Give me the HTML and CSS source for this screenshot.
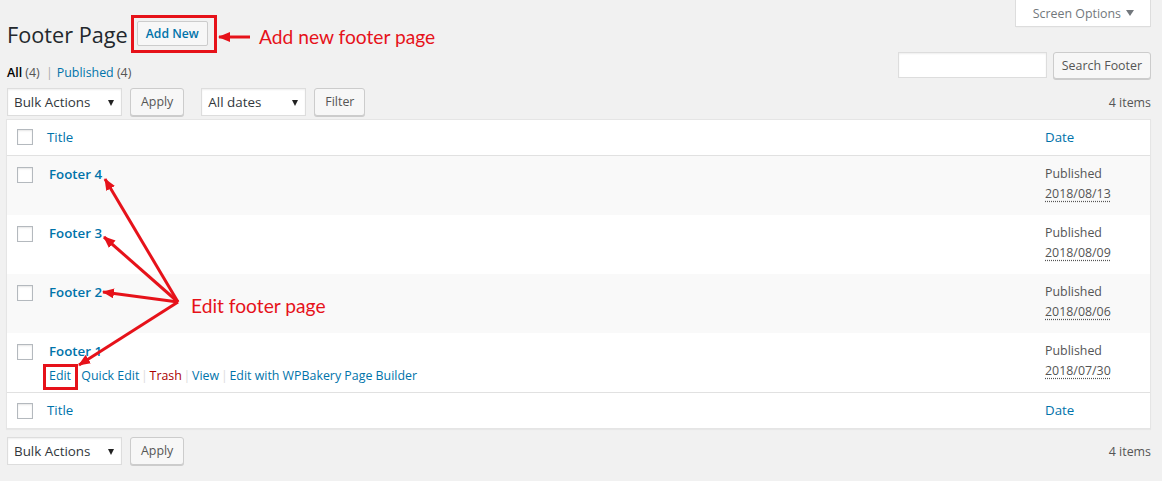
FILE: index.html
```html
<!DOCTYPE html>
<html lang="en">
<head>
    <meta charset="UTF-8">
    <title>Footer Page</title>
    <link rel="stylesheet" href="styles.css">
</head>
<body>
    <div class="wrap">
        <div class="screen-meta-links">
            <button class="screen-options">Screen Options <span class="caret"></span></button>
        </div>

        <div class="heading">
            <h1>Footer Page</h1>
            <a href="#" class="page-title-action">Add New</a>
        </div>

        <div class="list-head">
            <ul class="subsubsub">
                <li><a href="#" class="current">All <span class="count">(4)</span></a> <span class="sep">|</span></li>
                <li><a href="#">Published <span class="count">(4)</span></a></li>
            </ul>
            <div class="search-box">
                <input type="search" class="search-input">
                <button class="button search-submit">Search Footer</button>
            </div>
        </div>

        <div class="tablenav">
            <div class="tablenav-actions">
                <div class="select select-bulk">Bulk Actions</div>
                <button class="button">Apply</button>
            </div>
            <div class="tablenav-actions">
                <div class="select select-dates">All dates</div>
                <button class="button">Filter</button>
            </div>
            <div class="displaying-num">4 items</div>
        </div>

        <table class="list-table">
            <thead>
                <tr>
                    <td class="check-column"><input type="checkbox"></td>
                    <th class="column-title"><a href="#">Title</a></th>
                    <th class="column-date"><a href="#">Date</a></th>
                </tr>
            </thead>
            <tbody>
                <tr>
                    <th class="check-column"><input type="checkbox"></th>
                    <td class="column-title">
                        <strong><a href="#" class="row-title">Footer 4</a></strong>
                        <div class="row-actions">
                            <a href="#">Edit</a> <span class="sep">|</span> <a href="#">Quick Edit</a> <span class="sep">|</span> <a href="#" class="trash">Trash</a> <span class="sep">|</span> <a href="#">View</a> <span class="sep">|</span> <a href="#">Edit with WPBakery Page Builder</a>
                        </div>
                    </td>
                    <td class="column-date">Published<br><abbr title="2018/08/13 10:12:00 am">2018/08/13</abbr></td>
                </tr>
                <tr>
                    <th class="check-column"><input type="checkbox"></th>
                    <td class="column-title">
                        <strong><a href="#" class="row-title">Footer 3</a></strong>
                        <div class="row-actions">
                            <a href="#">Edit</a> <span class="sep">|</span> <a href="#">Quick Edit</a> <span class="sep">|</span> <a href="#" class="trash">Trash</a> <span class="sep">|</span> <a href="#">View</a> <span class="sep">|</span> <a href="#">Edit with WPBakery Page Builder</a>
                        </div>
                    </td>
                    <td class="column-date">Published<br><abbr title="2018/08/09 9:40:00 am">2018/08/09</abbr></td>
                </tr>
                <tr>
                    <th class="check-column"><input type="checkbox"></th>
                    <td class="column-title">
                        <strong><a href="#" class="row-title">Footer 2</a></strong>
                        <div class="row-actions">
                            <a href="#">Edit</a> <span class="sep">|</span> <a href="#">Quick Edit</a> <span class="sep">|</span> <a href="#" class="trash">Trash</a> <span class="sep">|</span> <a href="#">View</a> <span class="sep">|</span> <a href="#">Edit with WPBakery Page Builder</a>
                        </div>
                    </td>
                    <td class="column-date">Published<br><abbr title="2018/08/06 3:05:00 pm">2018/08/06</abbr></td>
                </tr>
                <tr class="hover">
                    <th class="check-column"><input type="checkbox"></th>
                    <td class="column-title">
                        <strong><a href="#" class="row-title">Footer 1</a></strong>
                        <div class="row-actions">
                            <a href="#">Edit</a> <span class="sep">|</span> <a href="#">Quick Edit</a> <span class="sep">|</span> <a href="#" class="trash">Trash</a> <span class="sep">|</span> <a href="#">View</a> <span class="sep">|</span> <a href="#">Edit with WPBakery Page Builder</a>
                        </div>
                    </td>
                    <td class="column-date">Published<br><abbr title="2018/07/30 11:20:00 am">2018/07/30</abbr></td>
                </tr>
            </tbody>
            <tfoot>
                <tr>
                    <td class="check-column"><input type="checkbox"></td>
                    <th class="column-title"><a href="#">Title</a></th>
                    <th class="column-date"><a href="#">Date</a></th>
                </tr>
            </tfoot>
        </table>

        <div class="tablenav tablenav-bottom">
            <div class="tablenav-actions">
                <div class="select select-bulk">Bulk Actions</div>
                <button class="button">Apply</button>
            </div>
            <div class="displaying-num">4 items</div>
        </div>
    </div>

    <!-- screenshot callouts -->
    <div class="annotations">
        <svg class="callouts" width="1162" height="481" viewBox="0 0 1162 481">
            <defs>
                <marker id="head" markerUnits="userSpaceOnUse" markerWidth="12" markerHeight="10" refX="11" refY="5" orient="auto">
                    <path d="M0,0 L12,5 L0,10 z" fill="#e6121a"/>
                </marker>
            </defs>
            <rect x="132.5" y="16.5" width="83" height="35" fill="none" stroke="#e6121a" stroke-width="3"/>
            <rect x="44.5" y="365.5" width="32" height="23" fill="none" stroke="#e6121a" stroke-width="3"/>
            <g stroke="#e6121a" stroke-width="3" marker-end="url(#head)">
                <line x1="250" y1="37" x2="219" y2="37"/>
                <line x1="178" y1="302" x2="105" y2="179"/>
                <line x1="178" y1="302" x2="104" y2="237"/>
                <line x1="178" y1="302" x2="103" y2="292"/>
                <line x1="178" y1="302" x2="79" y2="365"/>
            </g>
        </svg>
        <span class="callout-label label-add">Add new footer page</span>
        <span class="callout-label label-edit">Edit footer page</span>
    </div>
</body>
</html>
```

FILE: styles.css
```css
body {
    margin: 0;
    position: relative;
    background-color: #f1f1f1;
    font-family: "Open Sans", "Noto Sans", sans-serif;
    font-size: 12.4px;
    color: #444;
}
a {
    color: #0073aa;
    text-decoration: none;
}
.wrap {
    padding: 0 11px 0 6px;
}
.screen-meta-links {
    float: right;
}
.screen-options {
    height: 27px;
    padding: 0 16px 0 17px;
    background-color: #fff;
    border: 1px solid #ddd;
    border-top: none;
    box-shadow: 0 1px 1px -1px rgba(0, 0, 0, 0.1);
    font-family: inherit;
    font-size: 12.4px;
    color: #72777c;
    display: flex;
    align-items: center;
    gap: 5px;
}
.caret {
    width: 0;
    height: 0;
    border-left: 4px solid transparent;
    border-right: 4px solid transparent;
    border-top: 6px solid #72777c;
}
.heading {
    display: flex;
    align-items: flex-start;
    padding-top: 20px;
}
h1 {
    margin: 0;
    font-size: 21.7px;
    font-weight: 400;
    line-height: 29px;
    color: #23282d;
    padding-left: 1px;
}
.page-title-action {
    margin-left: 9px;
    margin-top: 1px;
    padding: 4px 8px 3px;
    border: 1px solid #ccc;
    border-radius: 2px;
    background-color: #f7f7f7;
    font-size: 12.2px;
    font-weight: 600;
    line-height: 16px;
}
.list-head {
    display: flex;
    justify-content: space-between;
    align-items: flex-start;
    margin-top: 3px;
}
.subsubsub {
    list-style: none;
    margin: 11px 0 0 1px;
    padding: 0;
    display: flex;
    line-height: 20px;
    color: #666;
}
.subsubsub li {
    margin-right: 4px;
}
.subsubsub .current {
    color: #000;
    font-weight: 600;
}
.subsubsub .count {
    color: #555;
    font-weight: 400;
}
.subsubsub .sep {
    color: #aaa;
    margin-left: 3px;
}
.search-box {
    display: flex;
    gap: 6px;
}
.search-input {
    width: 149px;
    height: 26px;
    box-sizing: border-box;
    margin: 0;
    border: 1px solid #ddd;
    background-color: #fff;
    box-shadow: inset 0 1px 2px rgba(0, 0, 0, 0.07);
}
.button {
    height: 27px;
    margin: 0;
    padding: 0 10px 1px;
    border: 1px solid #ccc;
    border-radius: 3px;
    background-color: #f7f7f7;
    box-shadow: 0 1px 0 #ccc;
    font-family: inherit;
    font-size: 12.4px;
    color: #555;
}
.search-submit {
    padding: 0 8px 1px;
}
.tablenav {
    display: flex;
    align-items: center;
    height: 28px;
    margin: 5px 0 3px;
    padding-left: 1px;
}
.tablenav-bottom {
    margin-top: 8px;
}
.tablenav-actions {
    display: flex;
    align-items: center;
    gap: 8px;
    margin-right: 17px;
}
.tablenav .button {
    height: 28px;
}
.select {
    position: relative;
    box-sizing: border-box;
    height: 28px;
    padding: 0 6px;
    line-height: 27px;
    border: 1px solid #ddd;
    background-color: #fff;
    box-shadow: inset 0 1px 2px rgba(0, 0, 0, 0.07);
    color: #32373c;
    font-size: 13.4px;
}
.select::after {
    content: "";
    position: absolute;
    right: 7px;
    top: 11px;
    border-left: 3px solid transparent;
    border-right: 3px solid transparent;
    border-top: 6px solid #222;
}
.select-bulk {
    width: 115px;
}
.select-dates {
    width: 105px;
}
.displaying-num {
    margin-left: auto;
    color: #555;
}
.list-table {
    width: 100%;
    border-spacing: 0;
    table-layout: fixed;
    background-color: #fff;
    border: 1px solid #e5e5e5;
    box-shadow: 0 1px 1px rgba(0, 0, 0, 0.04);
}
.list-table th,
.list-table td {
    box-sizing: border-box;
    text-align: left;
    vertical-align: top;
}
.list-table thead th,
.list-table tfoot th {
    padding: 8px 10px;
    font-size: 13.3px;
    font-weight: 400;
    line-height: 19px;
}
.list-table thead th,
.list-table thead td {
    border-bottom: 1px solid #e1e1e1;
}
.list-table tfoot th,
.list-table tfoot td {
    border-top: 1px solid #e1e1e1;
}
.list-table .check-column {
    width: 30px;
    padding: 9px 0 0 10px;
}
.list-table tfoot .check-column {
    padding-top: 10px;
}
.list-table tbody .check-column {
    padding-top: 11px;
}
.list-table .column-date {
    width: 115px;
}
.list-table tbody td {
    padding: 8px 10px;
    font-size: 12.4px;
    line-height: 19.5px;
    color: #555;
}
.list-table tbody td.column-title {
    padding-left: 12px;
}
.list-table tbody tr:nth-child(odd) {
    background-color: #f9f9f9;
}
input[type="checkbox"] {
    appearance: none;
    display: block;
    width: 16px;
    height: 16px;
    margin: 0;
    border: 1px solid #b4b9be;
    background-color: #fff;
    box-shadow: inset 0 1px 2px rgba(0, 0, 0, 0.1);
}
.column-title strong {
    display: block;
    height: 20px;
}
.row-title {
    font-size: 13.3px;
    font-weight: 600;
    line-height: 20px;
}
.row-actions {
    padding-top: 5px;
    height: 18px;
    line-height: 19px;
    color: #ddd;
    visibility: hidden;
    white-space: nowrap;
}
.row-actions .sep {
    margin: 0 -1.5px;
}
.hover .row-actions {
    visibility: visible;
}
.row-actions .trash {
    color: #a00;
}
abbr {
    text-decoration: underline dotted;
    text-underline-offset: 3px;
}
.annotations {
    position: absolute;
    top: 0;
    left: 0;
    width: 1162px;
    height: 481px;
    pointer-events: none;
}
.callouts {
    display: block;
}
.callout-label {
    position: absolute;
    font-family: Lato, sans-serif;
    font-size: 19.2px;
    line-height: 22px;
    color: #e6121a;
}
.label-add {
    left: 259px;
    top: 26px;
}
.label-edit {
    left: 191px;
    top: 295px;
}
```
